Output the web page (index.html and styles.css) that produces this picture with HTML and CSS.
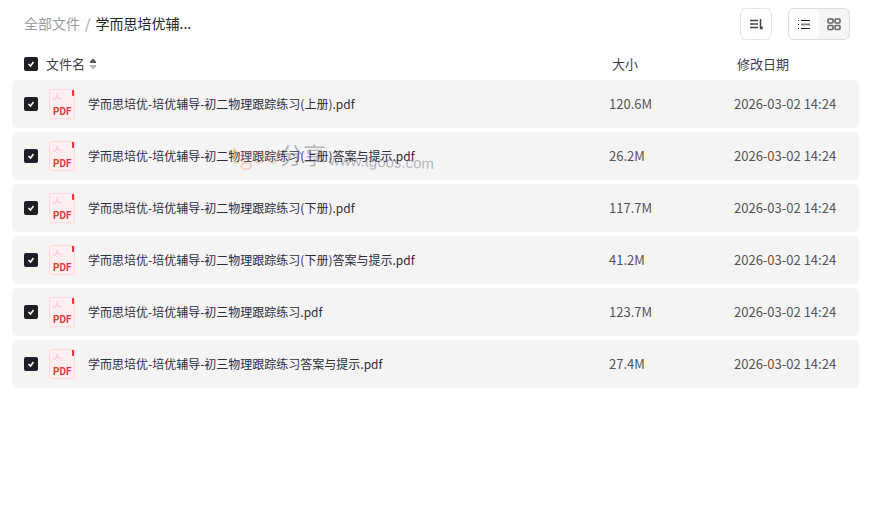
FILE: index.html
```html
<!DOCTYPE html>
<html lang="zh-CN">
<head>
    <meta charset="UTF-8">
    <meta name="viewport" content="width=device-width, initial-scale=1.0">
    <title>学而思培优辅导</title>
    <link rel="stylesheet" href="styles.css">
</head>
<body>
    <svg class="sprite" aria-hidden="true">
        <symbol id="pdf" viewBox="0 0 26 30">
            <rect x="0.5" y="0.5" width="25" height="29" rx="1.5" fill="#fdefef" stroke="#fbd9d9"/>
            <path d="M8 4.500v3.500l4 2M8 8l-3.500 3" fill="none" stroke="#fbd0d1" stroke-width="1.500"/>
            <path d="M23 1h2v6h-1a1 1 0 0 1-1-1z" fill="#e23b3b"/>
            <text x="4" y="26" class="pdf-label">PDF</text>
        </symbol>
    </svg>

    <div class="toolbar">
        <nav class="breadcrumb">
            <a href="#">全部文件</a>
            <span class="slash">/</span>
            <span class="current">学而思培优辅...</span>
        </nav>
        <div class="actions">
            <button class="sort-btn" aria-label="排序">
                <svg width="16" height="16" viewBox="0 0 16 16" fill="none" stroke="#444">
                    <path d="M2 4.500h8M2 11.500h8" stroke-width="1.400"/>
                    <path d="M2 8h8" stroke="#777" stroke-width="2"/>
                    <path d="M12.500 3v9.500h1.500v-2" stroke-width="1.500"/>
                </svg>
            </button>
            <div class="view-switch">
                <button class="active" aria-label="列表">
                    <svg width="16" height="16" viewBox="0 0 16 16" stroke="#222">
                        <path d="M2 4.500h1M5 4.500h9M2 12.500h1M5 12.500h9"/>
                        <path d="M2 8.500h1"/>
                        <path d="M5 8.500h9" stroke="#888" stroke-width="2"/>
                    </svg>
                </button>
                <button aria-label="网格">
                    <svg width="16" height="16" viewBox="0 0 16 16" fill="none" stroke="#666" stroke-width="1.600">
                        <rect x="2" y="3" width="5" height="4" rx="1"/>
                        <rect x="9" y="3" width="5" height="4" rx="1"/>
                        <rect x="2" y="9.500" width="5" height="4" rx="1"/>
                        <rect x="9" y="9.500" width="5" height="4" rx="1"/>
                    </svg>
                </button>
            </div>
        </div>
    </div>

    <div class="file-list">
        <table>
            <thead>
                <tr>
                    <th class="name">
                        <div class="head-cell">
                            <input type="checkbox" id="all" checked>
                            <label for="all">文件名</label>
                            <svg class="sorter" width="8" height="12" viewBox="0 0 8 12">
                                <path d="M4 0.500l3 3V5H1V3.500z" fill="#555"/>
                                <path d="M4 11.500l3-3V7H1v1.500z" fill="#b5b5b5"/>
                            </svg>
                        </div>
                    </th>
                    <th class="size">大小</th>
                    <th class="date">修改日期</th>
                </tr>
            </thead>
            <tbody>
                <tr>
                    <td><div class="name-cell"><input type="checkbox" id="f1" checked><svg class="file-icon"><use href="#pdf"/></svg><label for="f1">学而思培优-培优辅导-初二物理跟踪练习(上册).pdf</label></div></td>
                    <td class="info">120.6M</td>
                    <td class="info">2026-03-02 14:24</td>
                </tr>
                <tr>
                    <td><div class="name-cell"><input type="checkbox" id="f2" checked><svg class="file-icon"><use href="#pdf"/></svg><label for="f2">学而思培优-培优辅导-初二物理跟踪练习(上册)答案与提示.pdf</label></div></td>
                    <td class="info">26.2M</td>
                    <td class="info">2026-03-02 14:24</td>
                </tr>
                <tr>
                    <td><div class="name-cell"><input type="checkbox" id="f3" checked><svg class="file-icon"><use href="#pdf"/></svg><label for="f3">学而思培优-培优辅导-初二物理跟踪练习(下册).pdf</label></div></td>
                    <td class="info">117.7M</td>
                    <td class="info">2026-03-02 14:24</td>
                </tr>
                <tr>
                    <td><div class="name-cell"><input type="checkbox" id="f4" checked><svg class="file-icon"><use href="#pdf"/></svg><label for="f4">学而思培优-培优辅导-初二物理跟踪练习(下册)答案与提示.pdf</label></div></td>
                    <td class="info">41.2M</td>
                    <td class="info">2026-03-02 14:24</td>
                </tr>
                <tr>
                    <td><div class="name-cell"><input type="checkbox" id="f5" checked><svg class="file-icon"><use href="#pdf"/></svg><label for="f5">学而思培优-培优辅导-初三物理跟踪练习.pdf</label></div></td>
                    <td class="info">123.7M</td>
                    <td class="info">2026-03-02 14:24</td>
                </tr>
                <tr>
                    <td><div class="name-cell"><input type="checkbox" id="f6" checked><svg class="file-icon"><use href="#pdf"/></svg><label for="f6">学而思培优-培优辅导-初三物理跟踪练习答案与提示.pdf</label></div></td>
                    <td class="info">27.4M</td>
                    <td class="info">2026-03-02 14:24</td>
                </tr>
            </tbody>
        </table>
        <div class="watermark">
            <span class="brand"><span class="t">t</span><span class="goo">goo</span>分享</span>
            <span class="site">www.tgoos.com</span>
        </div>
    </div>
</body>
</html>
```
FILE: styles.css
```css
* {
    box-sizing: border-box;
}
body {
    margin: 0;
    padding: 0 15px 0 12px;
    font-family: "Noto Sans CJK SC", "Open Sans", sans-serif;
    font-size: 13px;
    color: #333;
    background-color: #fff;
}
.sprite {
    display: none;
}
.toolbar {
    display: flex;
    justify-content: space-between;
    align-items: center;
    height: 48px;
    padding: 0 9px 0 12px;
}
.breadcrumb {
    display: flex;
    gap: 5px;
    padding-bottom: 2px;
    font-size: 14px;
    line-height: 20px;
}
.breadcrumb a, .slash {
    color: #999ba3;
    text-decoration: none;
}
.current {
    color: #25262b;
}
.actions {
    display: flex;
    gap: 16px;
}
button {
    display: flex;
    align-items: center;
    justify-content: center;
    padding: 0;
    border: none;
    background: none;
    cursor: pointer;
}
.sort-btn {
    width: 32px;
    height: 32px;
    border: 1px solid #e4e4e6;
    border-radius: 6px;
}
.view-switch {
    display: flex;
    height: 32px;
    border: 1px solid #dcdcde;
    border-radius: 6px;
    background-color: #f4f4f4;
    overflow: hidden;
}
.view-switch button {
    width: 30px;
}
.view-switch .active {
    background-color: #fff;
    border-radius: 6px;
}
.file-list {
    position: relative;
}
table {
    width: 100%;
    table-layout: fixed;
    border-collapse: separate;
    border-spacing: 0 4px;
}
th {
    height: 24px;
    padding: 0 0 2px;
    font-weight: normal;
    text-align: left;
    color: #3c3c50;
}
.name {
    padding: 0;
}
.size, .date {
    width: 125px;
    padding-left: 3px;
}
td {
    height: 48px;
    padding: 0;
    background-color: #f4f4f4;
}
td:first-child {
    border-radius: 5px 0 0 5px;
}
td:last-child {
    border-radius: 0 5px 5px 0;
}
.info {
    padding-bottom: 2px;
    color: #555;
}
.head-cell, .name-cell {
    display: flex;
    align-items: center;
    padding-left: 12px;
}
.head-cell label, .name-cell label {
    padding-bottom: 2px;
}
.head-cell {
    gap: 8px;
}
.sorter {
    margin-left: -4px;
}
.name-cell {
    font-size: 12px;
    color: #2d2d40;
    white-space: nowrap;
}
.file-icon {
    width: 26px;
    height: 30px;
    margin: 0 13px 0 11px;
}
.pdf-label {
    font-family: Roboto, sans-serif;
    font-size: 10px;
    font-weight: bold;
    fill: #e23b3b;
}
input[type="checkbox"] {
    appearance: none;
    width: 14px;
    height: 14px;
    margin: 0;
    border-radius: 2px;
    background: #1e1f26 url("data:image/svg+xml,%3Csvg xmlns='http://www.w3.org/2000/svg' viewBox='0 0 14 14'%3E%3Cpath d='M4.500 7l2 2 3-4' fill='none' stroke='white' stroke-width='1.500'/%3E%3C/svg%3E");
}
.watermark {
    position: absolute;
    left: 219px;
    top: 90px;
    display: flex;
    align-items: flex-end;
    gap: 3px;
    pointer-events: none;
    color: rgba(80, 80, 90, 0.4);
    white-space: nowrap;
}
.brand {
    font-size: 23px;
    line-height: 32px;
}
.brand .t {
    color: rgba(250, 205, 70, 0.5);
}
.brand .goo {
    color: rgba(245, 140, 90, 0.35);
}
.site {
    font-family: "Liberation Sans", sans-serif;
    font-size: 15px;
    line-height: 16px;
    transform: rotate(2deg);
}
```
